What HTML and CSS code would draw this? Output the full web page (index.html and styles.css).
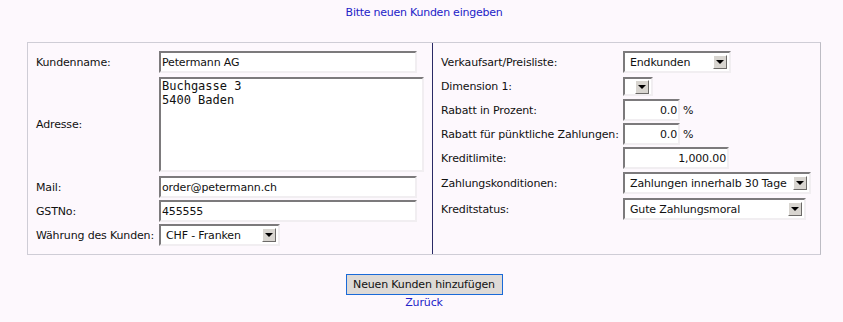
FILE: index.html
```html
<!DOCTYPE html>
<html lang="de">
<head>
  <meta charset="UTF-8" />
  <title>Neuer Kunde</title>
  <link rel="stylesheet" href="styles.css">
</head>
<body>
  <div class="seite">
    <div class="titel">Bitte neuen Kunden eingeben</div>

    <form class="kunde-box">
      <div class="spalte links">
        <div class="zeile abst-4">
          <label class="lbl">Kundenname:</label>
          <input class="txt w-lang" type="text" value="Petermann AG">
        </div>
        <div class="zeile abst-4">
          <label class="lbl">Adresse:</label>
          <textarea class="adr">Buchgasse 3
5400 Baden</textarea>
        </div>
        <div class="zeile abst-2">
          <label class="lbl">Mail:</label>
          <input class="txt w-lang" type="text" value="order@petermann.ch">
        </div>
        <div class="zeile abst-2">
          <label class="lbl">GSTNo:</label>
          <input class="txt w-lang" type="text" value="455555">
        </div>
        <div class="zeile">
          <label class="lbl">Währung des Kunden:</label>
          <div class="sel w-waehrung"><span class="sel-text">CHF - Franken</span><span class="pfeil"></span></div>
        </div>
      </div>

      <div class="spalte rechts">
        <div class="zeile abst-4">
          <label class="lbl">Verkaufsart/Preisliste:</label>
          <div class="sel w-preis"><span class="sel-text">Endkunden</span><span class="pfeil"></span></div>
        </div>
        <div class="zeile abst-3">
          <label class="lbl">Dimension 1:</label>
          <div class="sel sel-klein w-dim"><span class="sel-text"></span><span class="pfeil"></span></div>
        </div>
        <div class="zeile abst-2">
          <label class="lbl">Rabatt in Prozent:</label>
          <input class="txt num w-proz" type="text" value="0.0"><span class="einheit">%</span>
        </div>
        <div class="zeile abst-2">
          <label class="lbl">Rabatt für pünktliche Zahlungen:</label>
          <input class="txt num w-proz" type="text" value="0.0"><span class="einheit">%</span>
        </div>
        <div class="zeile abst-3">
          <label class="lbl">Kreditlimite:</label>
          <input class="txt num w-kredit" type="text" value="1,000.00">
        </div>
        <div class="zeile abst-4">
          <label class="lbl">Zahlungskonditionen:</label>
          <div class="sel w-zahl"><span class="sel-text">Zahlungen innerhalb 30 Tage</span><span class="pfeil"></span></div>
        </div>
        <div class="zeile">
          <label class="lbl">Kreditstatus:</label>
          <div class="sel w-status"><span class="sel-text">Gute Zahlungsmoral</span><span class="pfeil"></span></div>
        </div>
      </div>
    </form>

    <div class="aktionen">
      <button class="knopf" type="button">Neuen Kunden hinzufügen</button>
      <a class="zurueck" href="#">Zurück</a>
    </div>
  </div>
</body>
</html>
```

FILE: styles.css
```css
:root {
  --hintergrund: #fdf8fd;
  --blau: #2323c8;
  --rahmen: #cfcdd6;
  --trenner: #2a2a66;
  --feld-dunkel: #7c7a7c;
  --feld-hell: #f1eef1;
}

body {
  margin: 0;
  background: var(--hintergrund);
  font-family: "DejaVu Sans", sans-serif;
  font-size: 11px;
  letter-spacing: -0.15px;
  color: #111;
}

.seite {
  width: 794px;
  margin-left: 27px;
}

.titel {
  text-align: center;
  color: var(--blau);
  padding-top: 6px;
  height: 42px;
  box-sizing: border-box;
  letter-spacing: -0.25px;
}

.kunde-box {
  display: flex;
  margin: 0;
  height: 213px;
  box-sizing: border-box;
  border: 1px solid var(--rahmen);
  border-right-color: #bdbcc4;
}

.spalte {
  padding: 8px 0 0 8px;
  box-sizing: border-box;
}

.links {
  width: 405px;
  border-right: 1px solid var(--trenner);
}

.rechts {
  flex: 1;
}

.zeile {
  display: flex;
  align-items: center;
}

.abst-2 { margin-bottom: 2px; }
.abst-3 { margin-bottom: 3px; }
.abst-4 { margin-bottom: 4px; }

.links .lbl { width: 123px; }
.rechts .lbl { width: 182px; }

.lbl {
  flex-shrink: 0;
  white-space: nowrap;
}

.txt {
  font: inherit;
  letter-spacing: inherit;
  height: 22px;
  box-sizing: border-box;
  margin: 0;
  padding: 1px 1px 0;
  background: #fff;
  border: 2px solid;
  border-color: var(--feld-dunkel) var(--feld-hell) var(--feld-hell) var(--feld-dunkel);
  color: #111;
}

.w-lang { width: 258px; }
.w-proz { width: 57px; }
.w-kredit { width: 106px; }

.num {
  text-align: right;
  padding-right: 1px;
}

.einheit {
  margin-left: 3px;
}

.adr {
  font-family: "DejaVu Sans Mono", monospace;
  font-size: 12px;
  line-height: 14px;
  letter-spacing: 0;
  width: 265px;
  height: 95px;
  box-sizing: border-box;
  margin: 0;
  padding: 0 1px;
  resize: none;
  background: #fff;
  border: 2px solid;
  border-color: var(--feld-dunkel) var(--feld-hell) var(--feld-hell) var(--feld-dunkel);
  color: #111;
}

.sel {
  position: relative;
  height: 22px;
  box-sizing: border-box;
  background: #fff;
  border: 2px solid;
  border-color: var(--feld-dunkel) var(--feld-hell) var(--feld-hell) var(--feld-dunkel);
  display: flex;
  align-items: center;
}

.sel-text {
  padding-left: 5px;
  white-space: nowrap;
}

.sel-klein { height: 19px; }

.w-waehrung { width: 121px; }
.w-preis { width: 108px; }
.w-dim { width: 30px; }
.w-zahl { width: 188px; }
.w-status { width: 183px; }

/* Pfeilknopf rechts im Auswahlfeld */
.pfeil {
  position: absolute;
  right: 2px;
  top: 50%;
  margin-top: -7px;
  width: 14px;
  height: 14px;
  box-sizing: border-box;
  background: #d8d5d0;
  border: 1px solid;
  border-color: #fff #6c6a68 #6c6a68 #fff;
}

.pfeil::after {
  content: "";
  position: absolute;
  left: 2px;
  top: 4px;
  border-left: 4px solid transparent;
  border-right: 4px solid transparent;
  border-top: 4px solid #000;
}

.aktionen {
  display: flex;
  flex-direction: column;
  align-items: center;
  padding-top: 19px;
}

.knopf {
  font: inherit;
  letter-spacing: inherit;
  width: 157px;
  height: 21px;
  box-sizing: border-box;
  padding: 0;
  background: #dedad6;
  border: 1px solid #1a6ad8;
  color: #111;
}

.zurueck {
  color: var(--blau);
  text-decoration: none;
  margin-top: 1px;
}
```
